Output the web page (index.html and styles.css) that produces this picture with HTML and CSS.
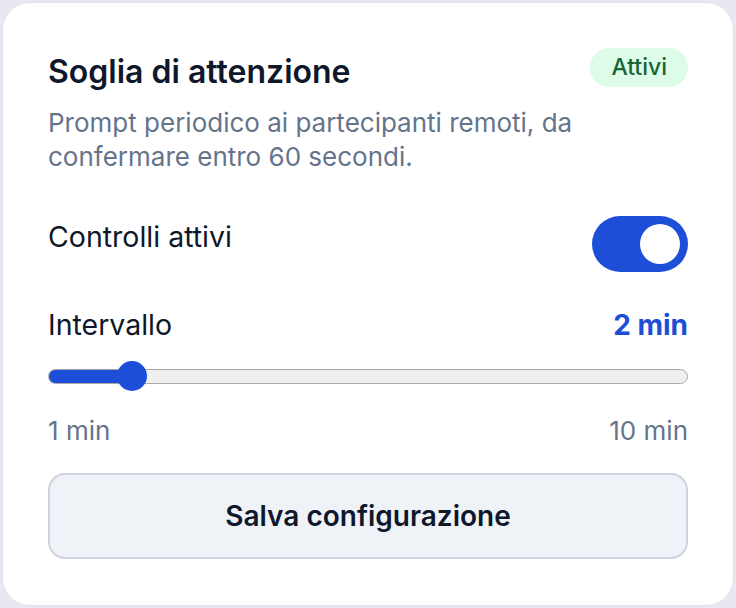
FILE: index.html
```html
<!DOCTYPE html>
<html lang="it">
<head>
<meta charset="utf-8">
<title>Soglia di attenzione</title>
<link rel="stylesheet" href="styles.css">
</head>
<body>
<main class="page">
  <section class="card">
    <header class="card-head">
      <div class="head-text">
        <h1 class="title">Soglia di attenzione</h1>
        <p class="desc">Prompt periodico ai partecipanti remoti, da confermare entro 60 secondi.</p>
      </div>
      <span class="badge">Attivi</span>
    </header>

    <div class="row toggle-row">
      <span class="label">Controlli attivi</span>
      <button class="switch is-on" role="switch" aria-checked="true" aria-label="Controlli attivi"><span class="knob"></span></button>
    </div>

    <div class="row interval-row">
      <span class="label">Intervallo</span>
      <span class="value">2 min</span>
    </div>

    <input class="range" type="range" min="1" max="10" value="2" style="--fill: 0.1111" aria-label="Intervallo">

    <div class="row scale">
      <span>1 min</span>
      <span>10 min</span>
    </div>

    <button class="save">Salva configurazione</button>
  </section>
</main>
</body>
</html>
```

FILE: styles.css
```css
* { box-sizing: border-box; }

html, body {
  margin: 0;
  height: 100%;
}

body {
  background: #e8e8f2;
  font-family: Inter, "Noto Sans", sans-serif;
  color: #0f172a;
}

.page {
  padding: 2px;
  height: 100%;
}

.card {
  height: 100%;
  background: #ffffff;
  border: 1px solid #dfe0ec;
  border-radius: 28px;
  padding: 45px;
  display: flex;
  flex-direction: column;
}

.card-head {
  display: flex;
  align-items: flex-start;
  gap: 8px;
}

.head-text {
  flex: 1;
}

.title {
  margin: 0;
  font-size: 32px;
  font-weight: 600;
  line-height: 48px;
  color: #0f172a;
}

.desc {
  margin: 10px 0 0;
  font-size: 26px;
  line-height: 33.5px;
  color: #64748b;
}

.badge {
  flex: none;
  height: 39px;
  padding: 0 21px;
  border-radius: 20px;
  background: #dcfce7;
  color: #166534;
  font-size: 23px;
  font-weight: 500;
  line-height: 39px;
}

.row {
  display: flex;
  justify-content: space-between;
}

.label {
  font-size: 28.5px;
  line-height: 41px;
  color: #0f172a;
}

.toggle-row {
  margin-top: 43px;
  align-items: flex-start;
}

.switch {
  width: 96px;
  height: 56px;
  border: 0;
  padding: 8px;
  border-radius: 28px;
  background: #1d4ed8;
  display: flex;
  justify-content: flex-end;
  cursor: pointer;
}

.knob {
  width: 40px;
  height: 40px;
  border-radius: 50%;
  background: #ffffff;
}

.interval-row {
  margin-top: 31.5px;
  align-items: baseline;
}

.value {
  font-size: 28px;
  font-weight: 700;
  color: #1d4ed8;
}

/* Native range restyled: blue fill up to the thumb, grey rail after it */
.range {
  -webkit-appearance: none;
  appearance: none;
  display: block;
  width: 100%;
  height: 30px;
  margin: 16.5px 0 0;
  background: transparent;
}

.range::-webkit-slider-runnable-track {
  height: 15px;
  border-radius: 8px;
  border: 1.5px solid #a9a9a9;
  background: linear-gradient(to right,
    #1d4ed8 0,
    #1d4ed8 calc(15px + (100% - 30px) * var(--fill)),
    #efefef calc(15px + (100% - 30px) * var(--fill)));
}

.range::-webkit-slider-thumb {
  -webkit-appearance: none;
  appearance: none;
  width: 30px;
  height: 30px;
  border-radius: 50%;
  background: #1d4ed8;
  border: 0;
  margin-top: -9px;
}

.scale {
  margin-top: 23px;
  font-size: 26px;
  line-height: 33px;
  color: #64748b;
}

.save {
  margin-top: 26px;
  height: 86px;
  width: 100%;
  flex: none;
  border: 2px solid #cfd2e0;
  border-radius: 17px;
  background: #eff3f8;
  font-family: Inter, "Noto Sans", sans-serif;
  font-size: 28px;
  font-weight: 600;
  color: #0f172a;
  cursor: pointer;
}
```
